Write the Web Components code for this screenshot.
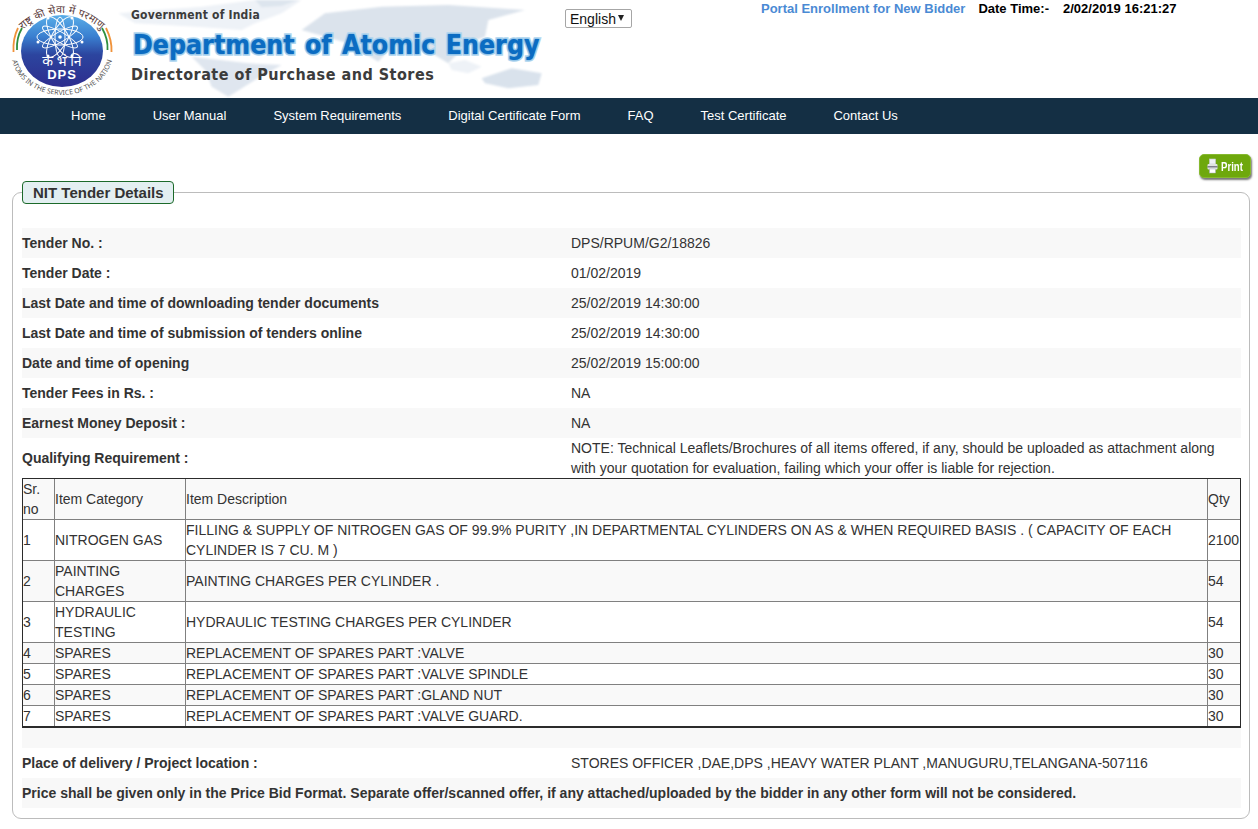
<!DOCTYPE html>
<html lang="en">
<head>
<meta charset="utf-8">
<title>NIT Tender Details</title>
<style>
  html, body { margin: 0; padding: 0; background: #fff; }
  body { font-family: "Liberation Sans", Arial, sans-serif; font-size: 14px; color: #333; }
</style>
</head>
<body>
<site-header></site-header>
<site-nav>
  <nav-link>Home</nav-link>
  <nav-link>User Manual</nav-link>
  <nav-link>System Requirements</nav-link>
  <nav-link>Digital Certificate Form</nav-link>
  <nav-link>FAQ</nav-link>
  <nav-link>Test Certificate</nav-link>
  <nav-link>Contact Us</nav-link>
</site-nav>
<print-bar></print-bar>
<tender-box heading="NIT Tender Details">
  <detail-row label="Tender No. :" shade>DPS/RPUM/G2/18826</detail-row>
  <detail-row label="Tender Date :">01/02/2019</detail-row>
  <detail-row label="Last Date and time of downloading tender documents" shade>25/02/2019 14:30:00</detail-row>
  <detail-row label="Last Date and time of submission of tenders online">25/02/2019 14:30:00</detail-row>
  <detail-row label="Date and time of opening" shade>25/02/2019 15:00:00</detail-row>
  <detail-row label="Tender Fees in Rs. :">NA</detail-row>
  <detail-row label="Earnest Money Deposit :" shade>NA</detail-row>
  <detail-row label="Qualifying Requirement :" tall>NOTE: Technical Leaflets/Brochures of all items offered, if any, should be uploaded as attachment along with your quotation for evaluation, failing which your offer is liable for rejection.</detail-row>
  <item-table></item-table>
  <detail-row shade spacer></detail-row>
  <detail-row label="Place of delivery / Project location :">STORES OFFICER ,DAE,DPS ,HEAVY WATER PLANT ,MANUGURU,TELANGANA-507116</detail-row>
  <detail-row label="Price shall be given only in the Price Bid Format. Separate offer/scanned offer, if any attached/uploaded by the bidder in any other form will not be considered." shade wide></detail-row>
</tender-box>

<script>
// site header: logo, department title, language picker, enrollment link + clock
class SiteHeader extends HTMLElement {
  constructor() {
    super();
    this.attachShadow({ mode: 'open' });
    this.shadowRoot.innerHTML = `
      <style>
        :host { display: block; position: relative; height: 98px; overflow: hidden; background: #fff; }
        .map { position: absolute; left: 115px; top: 0; width: 440px; height: 98px; }
        .row { position: relative; display: flex; align-items: flex-start; height: 98px; }
        dps-logo { flex: none; width: 120px; height: 98px; margin-left: 3px; }
        .title { flex: none; width: 434px; margin-left: 8px; padding-top: 8px; font-family: "DejaVu Sans Condensed", "DejaVu Sans", sans-serif; font-weight: bold; color: #3c3c3c; white-space: nowrap; }
        .gov { font-size: 12px; line-height: 15px; letter-spacing: .2px; }
        .dept { font-size: 26.5px; line-height: 33px; margin-top: 5px; margin-left: 2px; color: #0b6cc2; -webkit-text-stroke: 3.4px #b4d8f0; paint-order: stroke fill; word-spacing: 2px; text-shadow: 0 0 2px #3b8fd0; }
        .dir { font-size: 16px; line-height: 20px; margin-top: 4px; letter-spacing: .5px; }
        lang-picker { flex: none; margin-top: 9px; }
        .right { flex: none; margin-left: 129px; padding-top: 1px; display: flex; line-height: 16px; white-space: nowrap; }
        .enroll { color: #4a8ad4; font-weight: bold; font-size: 13px; }
        .clock { color: #000; font-weight: bold; font-size: 13px; margin-left: 13px; }
        .stamp { color: #000; font-weight: bold; font-size: 13px; margin-left: 14px; }
      </style>
      <svg class="map" viewBox="0 0 1320 294" aria-hidden="true">
        <defs><filter id="soft"><feGaussianBlur stdDeviation="3"/></filter></defs>
        <g filter="url(#soft)">
          <path fill="#eef2f7" d="M10 40 L120 30 L260 20 L420 0 L560 0 L500 40 L420 70 L380 90 L240 80 L60 70 Z"/>
          <path fill="#dde5ee" d="M420 0 H550 L500 18 L440 22 Z"/>
          <path fill="#dbe3ec" d="M630 40 L800 20 L1000 15 L1230 30 L1120 60 L1110 110 L1060 130 L1000 190 L900 130 L830 140 L790 185 L700 130 L560 90 Z"/>
          <path fill="#dfe6ef" d="M230 170 L400 190 L500 195 L420 240 L340 290 L290 260 L270 210 Z"/>
          <path fill="#d9e2ec" d="M1100 235 L1190 205 L1280 220 L1270 255 L1180 265 L1110 250 Z"/>
          <path fill="#eef2f7" d="M1000 190 L1050 180 L1100 200 L1060 220 L1010 210 Z"/>
        </g>
      </svg>
      <div class="row">
        <dps-logo></dps-logo>
        <div class="title">
          <div class="gov">Government of India</div>
          <div class="dept">Department of Atomic Energy</div>
          <div class="dir">Directorate of Purchase and Stores</div>
        </div>
        <lang-picker></lang-picker>
        <div class="right">
          <span class="enroll">Portal Enrollment for New Bidder</span>
          <span class="clock">Date Time:-</span>
          <span class="stamp">2/02/2019 16:21:27</span>
        </div>
      </div>
    `;
  }
}

// language select, the arrow is a small css triangle over the box
class LangPicker extends HTMLElement {
  constructor() {
    super();
    this.attachShadow({ mode: 'open' });
    this.shadowRoot.innerHTML = `
      <style>
        :host { display: block; position: relative; width: 67px; height: 19px; }
        select { appearance: none; -webkit-appearance: none; display: block; width: 67px; height: 19px; box-sizing: border-box; margin: 0; padding: 0 0 0 4px; font: 14px "Liberation Sans", Arial, sans-serif; color: #111; background: #fff; border: 1px solid #a6a6a6; border-radius: 2px; }
        .arrow { position: absolute; right: 8px; top: 6px; width: 0; height: 0; border-left: 3px solid transparent; border-right: 3px solid transparent; border-top: 6px solid #222; pointer-events: none; }
      </style>
      <select><option>English</option></select>
      <span class="arrow"></span>
    `;
  }
}

// round DPS seal
class DpsLogo extends HTMLElement {
  constructor() {
    super();
    this.attachShadow({ mode: 'open' });
    this.shadowRoot.innerHTML = `
      <style>
        :host { display: block; }
        svg { display: block; width: 120px; height: 98px; }
        text { font-family: "Noto Sans", "DejaVu Sans", sans-serif; }
      </style>
      <svg viewBox="3 0 120 98" aria-label="DPS seal">
        <defs>
          <linearGradient id="disc" x1="0" y1="0" x2="0" y2="1">
            <stop offset="0" stop-color="#5aaee8"/>
            <stop offset=".3" stop-color="#3a7fd0"/>
            <stop offset=".55" stop-color="#2c459f"/>
            <stop offset="1" stop-color="#2e2d8e"/>
          </linearGradient>
          <path id="topArc" d="M20 32 Q62 -6 104 32"/>
          <path id="botArc" d="M11 52 A51 43 0 0 0 113 52"/>
        </defs>
        <ellipse cx="62" cy="51" rx="41" ry="36" fill="url(#disc)"/>
        <g fill="none" stroke="#fff" stroke-width="1">
          <ellipse cx="60" cy="37" rx="23" ry="8"/>
          <ellipse cx="60" cy="37" rx="23" ry="8" transform="rotate(60 60 37)"/>
          <ellipse cx="60" cy="37" rx="23" ry="8" transform="rotate(120 60 37)"/>
          <ellipse cx="60" cy="37" rx="20" ry="5" transform="rotate(30 60 37)"/>
          <ellipse cx="60" cy="37" rx="20" ry="5" transform="rotate(90 60 37)"/>
          <ellipse cx="60" cy="37" rx="20" ry="5" transform="rotate(150 60 37)"/>
        </g>
        <g fill="#fff">
          <circle cx="38" cy="42" r="1.5"/><circle cx="82" cy="42" r="1.5"/>
          <circle cx="48" cy="18" r="1.5"/><circle cx="72" cy="18" r="1.5"/>
          <circle cx="48" cy="56" r="1.5"/><circle cx="72" cy="56" r="1.5"/>
          <circle cx="60" cy="37" r="1.8"/>
        </g>
        <path d="M13.5 52 C13 43 14 36 18 28" fill="none" stroke="#f0923a" stroke-width="1.8"/>
        <path d="M17 50 C16.5 42 18 35 22 28" fill="none" stroke="#2f8f3f" stroke-width="1.8"/>
        <path d="M111.5 52 C112 43 110 36 106 28" fill="none" stroke="#f0923a" stroke-width="1.8"/>
        <path d="M107.5 50 C108 42 106 35 102 28" fill="none" stroke="#2f8f3f" stroke-width="1.8"/>
        <text font-size="10.5" letter-spacing=".3" fill="#5a3a3a"><textPath href="#topArc" startOffset="50%" text-anchor="middle">राष्ट्र की सेवा में परमाणु</textPath></text>
        <text font-size="7" fill="#555"><textPath href="#botArc" startOffset="50%" text-anchor="middle">ATOMS IN THE SERVICE OF THE NATION</textPath></text>
        <text x="62" y="66" font-size="14" fill="#fff" text-anchor="middle">क भं नि</text>
        <text x="62" y="79" font-size="13" font-weight="bold" letter-spacing="1" fill="#fff" text-anchor="middle" style="font-family:'Liberation Sans',sans-serif">DPS</text>
      </svg>
    `;
  }
}

class SiteNav extends HTMLElement {
  constructor() {
    super();
    this.attachShadow({ mode: 'open' });
    this.shadowRoot.innerHTML = `
      <style>
        :host { display: flex; gap: 47px; height: 36px; align-items: center; padding: 0 0 1px 71px; box-sizing: border-box; background: #142f44; }
      </style>
      <slot></slot>
    `;
  }
}

class NavLink extends HTMLElement {
  constructor() {
    super();
    this.attachShadow({ mode: 'open' });
    this.shadowRoot.innerHTML = `
      <style>
        :host { display: block; color: #fff; font-size: 13px; white-space: nowrap; cursor: pointer; }
      </style>
      <slot></slot>
    `;
  }
}

// green print button on the right of the page
class PrintBar extends HTMLElement {
  constructor() {
    super();
    this.attachShadow({ mode: 'open' });
    this.shadowRoot.innerHTML = `
      <style>
        :host { display: flex; justify-content: flex-end; height: 47px; padding: 20px 7px 0 0; box-sizing: border-box; }
        .btn { display: flex; align-items: center; padding-left: 7px; width: 52px; height: 24px; background: #6ea80c; border-radius: 5px; box-shadow: 1px 2px 2px #777; color: #fff; font: bold 13px "Liberation Sans", sans-serif; border: 1px solid #86b92f; box-sizing: border-box; }
        svg { flex: none; width: 11px; height: 16px; display: block; }
        span { display: block; margin-left: 3px; transform: scaleX(.74); transform-origin: left center; }
      </style>
      <div class="btn">
        <svg viewBox="0 0 11 16" aria-hidden="true">
          <rect x="2.5" y="1" width="6" height="5" fill="#eef1f4" stroke="#c8ccd0" stroke-width=".6"/>
          <rect x="0.5" y="6" width="10" height="5.5" rx="1" fill="#dfe3e0"/>
          <rect x="0.5" y="8.2" width="10" height="1.2" fill="#667"/>
          <rect x="2.5" y="11" width="6" height="4" fill="#fff" stroke="#aab" stroke-width=".5"/>
        </svg>
        <span>Print</span>
      </div>
    `;
  }
}

class TenderBox extends HTMLElement {
  constructor() {
    super();
    this.attachShadow({ mode: 'open' });
    this.shadowRoot.innerHTML = `
      <style>
        :host { display: block; padding: 0 8px 10px 12px; }
        fieldset { margin: 0; padding: 24px 8px 10px 9px; border: 1px solid #bcbcbc; border-radius: 9px; min-width: 0; }
        legend { margin: 0 13px 0 0; padding: 0 9px 0 10px; height: 23px; box-sizing: border-box; line-height: 21px; font-size: 15px; font-weight: bold; color: #333; background: #e3eff1; border: 1px solid #1c6a2a; border-radius: 4px; }
      </style>
      <fieldset>
        <legend></legend>
        <slot></slot>
      </fieldset>
    `;
    this.shadowRoot.querySelector('legend').textContent = this.getAttribute('heading');
  }
}

// one label/value line of the details list
class DetailRow extends HTMLElement {
  constructor() {
    super();
    this.attachShadow({ mode: 'open' });
    this.shadowRoot.innerHTML = `
      <style>
        :host { display: grid; grid-template-columns: 549px 1fr; align-items: center; height: 30px; line-height: 20px; color: #333; }
        :host([shade]) { background: #f8f8f8; }
        :host([tall]) { height: 40px; }
        :host([spacer]) { height: 20px; }
        :host([wide]) { grid-template-columns: 1fr; }
        .label { font-weight: bold; }
        :host([wide]) .value { display: none; }
      </style>
      <div class="label"></div>
      <div class="value"><slot></slot></div>
    `;
    this.shadowRoot.querySelector('.label').textContent = this.getAttribute('label') || '';
  }
}

const ITEMS = [
  ['Sr. no', 'Item Category', 'Item Description', 'Qty'],
  ['1', 'NITROGEN GAS', 'FILLING & SUPPLY OF NITROGEN GAS OF 99.9% PURITY ,IN DEPARTMENTAL CYLINDERS ON AS & WHEN REQUIRED BASIS . ( CAPACITY OF EACH CYLINDER IS 7 CU. M )', '2100'],
  ['2', 'PAINTING CHARGES', 'PAINTING CHARGES PER CYLINDER .', '54'],
  ['3', 'HYDRAULIC TESTING', 'HYDRAULIC TESTING CHARGES PER CYLINDER', '54'],
  ['4', 'SPARES', 'REPLACEMENT OF SPARES PART :VALVE', '30'],
  ['5', 'SPARES', 'REPLACEMENT OF SPARES PART :VALVE SPINDLE', '30'],
  ['6', 'SPARES', 'REPLACEMENT OF SPARES PART :GLAND NUT', '30'],
  ['7', 'SPARES', 'REPLACEMENT OF SPARES PART :VALVE GUARD.', '30'],
];

class ItemTable extends HTMLElement {
  constructor() {
    super();
    this.attachShadow({ mode: 'open' });
    this.shadowRoot.innerHTML = `
      <style>
        :host { display: block; }
        table { width: 1219px; table-layout: fixed; border-collapse: separate; border-spacing: 0; border: 1px solid #2b2b2b; border-bottom-width: 2px; box-sizing: border-box; line-height: 20px; color: #333; font-size: 14px; }
        td { padding: 0; border-right: 1px solid #808080; border-bottom: 1px solid #808080; vertical-align: middle; }
        td:last-child { border-right: 0; }
        tr:last-child td { border-bottom: 0; }
        tr:nth-child(odd) { background: #f9f9f9; }
      </style>
      <table>
        <colgroup><col style="width:32px"><col style="width:131px"><col style="width:1022px"><col style="width:32px"></colgroup>
        <tbody></tbody>
      </table>
    `;
    const body = this.shadowRoot.querySelector('tbody');
    ITEMS.forEach((row) => {
      const tr = document.createElement('tr');
      row.forEach((cell) => {
        const td = document.createElement('td');
        td.textContent = cell;
        tr.appendChild(td);
      });
      body.appendChild(tr);
    });
  }
}

customElements.define('dps-logo', DpsLogo);
customElements.define('lang-picker', LangPicker);
customElements.define('site-header', SiteHeader);
customElements.define('site-nav', SiteNav);
customElements.define('nav-link', NavLink);
customElements.define('print-bar', PrintBar);
customElements.define('tender-box', TenderBox);
customElements.define('detail-row', DetailRow);
customElements.define('item-table', ItemTable);
</script>
</body>
</html>
